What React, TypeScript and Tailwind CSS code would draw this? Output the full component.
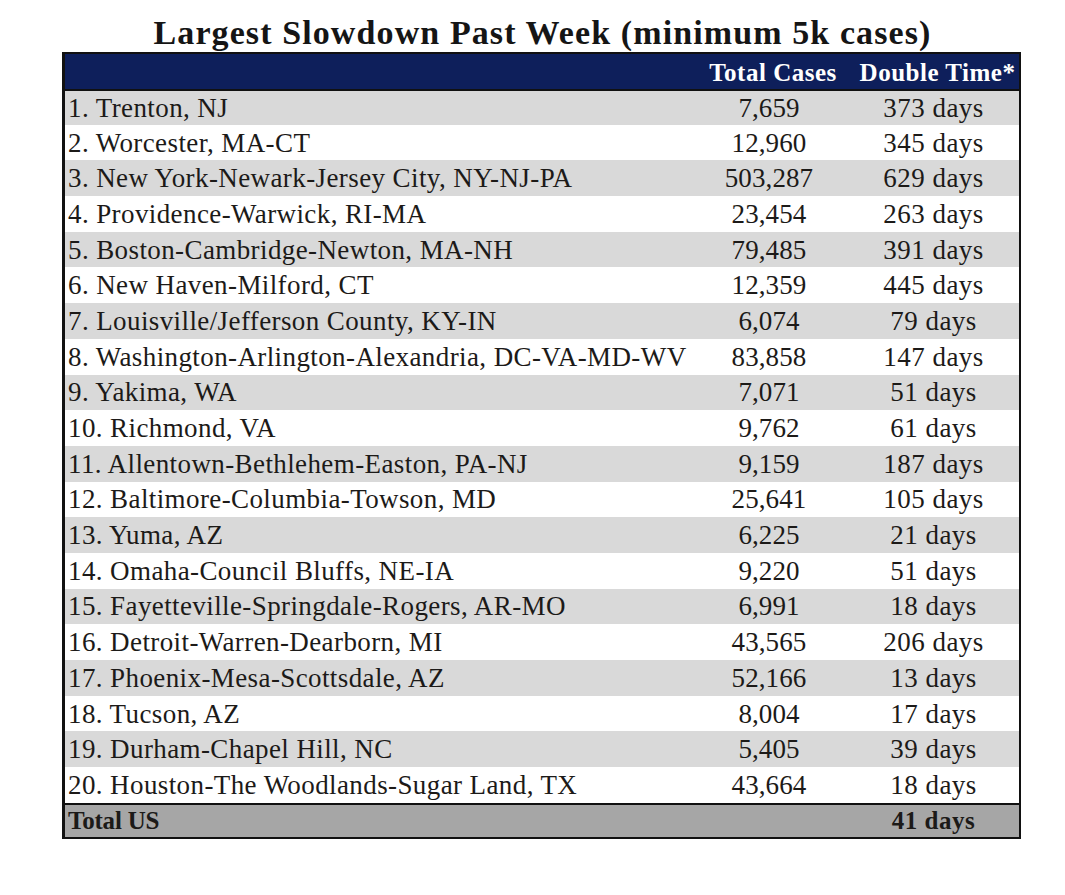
import React from 'react';

const rows: [string, string, string][] = [
  ['1. Trenton, NJ', '7,659', '373 days'],
  ['2. Worcester, MA-CT', '12,960', '345 days'],
  ['3. New York-Newark-Jersey City, NY-NJ-PA', '503,287', '629 days'],
  ['4. Providence-Warwick, RI-MA', '23,454', '263 days'],
  ['5. Boston-Cambridge-Newton, MA-NH', '79,485', '391 days'],
  ['6. New Haven-Milford, CT', '12,359', '445 days'],
  ['7. Louisville/Jefferson County, KY-IN', '6,074', '79 days'],
  ['8. Washington-Arlington-Alexandria, DC-VA-MD-WV', '83,858', '147 days'],
  ['9. Yakima, WA', '7,071', '51 days'],
  ['10. Richmond, VA', '9,762', '61 days'],
  ['11. Allentown-Bethlehem-Easton, PA-NJ', '9,159', '187 days'],
  ['12. Baltimore-Columbia-Towson, MD', '25,641', '105 days'],
  ['13. Yuma, AZ', '6,225', '21 days'],
  ['14. Omaha-Council Bluffs, NE-IA', '9,220', '51 days'],
  ['15. Fayetteville-Springdale-Rogers, AR-MO', '6,991', '18 days'],
  ['16. Detroit-Warren-Dearborn, MI', '43,565', '206 days'],
  ['17. Phoenix-Mesa-Scottsdale, AZ', '52,166', '13 days'],
  ['18. Tucson, AZ', '8,004', '17 days'],
  ['19. Durham-Chapel Hill, NC', '5,405', '39 days'],
  ['20. Houston-The Woodlands-Sugar Land, TX', '43,664', '18 days'],
];

export default function App() {
  return (
    <div className="w-[1065px] h-[895px] bg-white text-[#1c1a18] font-['Liberation_Serif']">
      {/* Title */}
      <div className="h-[52px] flex items-end justify-center pl-[20px]">
        <h1 className="font-['Liberation_Serif'] text-[34px] tracking-[1.1px] font-bold leading-[38px] text-[#151515] whitespace-nowrap">
          Largest Slowdown Past Week (minimum 5k cases)
        </h1>
      </div>

      {/* Table */}
      <div className="ml-[62px] w-[959px] border-l-[3px] border-r-2 border-[#111] font-['Liberation_Serif']">
        <div className="grid grid-cols-[1fr_150px_169px] h-[37px] bg-[#0e1f5b] border-t-2 border-[#111] items-end pb-[2px] text-white font-bold text-[25px] tracking-[0.5px] leading-[28px]">
          <div />
          <div className="text-center pr-[4px] whitespace-nowrap">Total Cases</div>
          <div className="text-center pl-[6px] whitespace-nowrap">Double Time*</div>
        </div>
        {rows.map(([name, cases, days], i) => (
          <div
            key={name}
            className={`grid grid-cols-[1fr_150px_169px] h-[35.7px] items-center font-['Liberation_Serif'] text-[27px] leading-[30px] ${i % 2 === 0 ? 'bg-[#d9d9d9]' : 'bg-white'} ${i === 0 ? 'border-t-2 border-[#111]' : ''}`}
          >
            <div className="pl-[3px] whitespace-nowrap tracking-[0.4px]">{name}</div>
            <div className="text-center pr-[12px] tracking-[0.1px]">{cases}</div>
            <div className="text-center pr-[2px] tracking-[0.5px]">{days}</div>
          </div>
        ))}
        <div className="grid grid-cols-[1fr_150px_169px] h-[36px] items-center bg-[#a6a6a6] border-t-2 border-b-2 border-[#111] font-bold text-[25px] leading-[28px]">
          <div className="pl-[3px] tracking-[-0.2px]">Total US</div>
          <div />
          <div className="text-center pr-[2px] tracking-[0.5px]">41 days</div>
        </div>
      </div>
    </div>
  );
}
